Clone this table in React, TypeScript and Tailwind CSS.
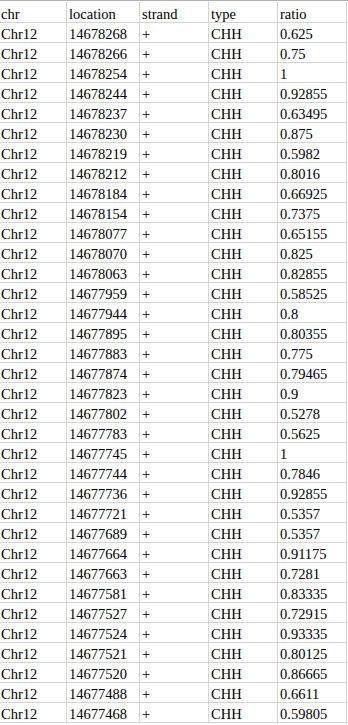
import React from 'react';

const rows: [string, string][] = [
  ['14678268', '0.625'],
  ['14678266', '0.75'],
  ['14678254', '1'],
  ['14678244', '0.92855'],
  ['14678237', '0.63495'],
  ['14678230', '0.875'],
  ['14678219', '0.5982'],
  ['14678212', '0.8016'],
  ['14678184', '0.66925'],
  ['14678154', '0.7375'],
  ['14678077', '0.65155'],
  ['14678070', '0.825'],
  ['14678063', '0.82855'],
  ['14677959', '0.58525'],
  ['14677944', '0.8'],
  ['14677895', '0.80355'],
  ['14677883', '0.775'],
  ['14677874', '0.79465'],
  ['14677823', '0.9'],
  ['14677802', '0.5278'],
  ['14677783', '0.5625'],
  ['14677745', '1'],
  ['14677744', '0.7846'],
  ['14677736', '0.92855'],
  ['14677721', '0.5357'],
  ['14677689', '0.5357'],
  ['14677664', '0.91175'],
  ['14677663', '0.7281'],
  ['14677581', '0.83335'],
  ['14677527', '0.72915'],
  ['14677524', '0.93335'],
  ['14677521', '0.80125'],
  ['14677520', '0.86665'],
  ['14677488', '0.6611'],
  ['14677468', '0.59805'],
];

const cols = 'grid grid-cols-[67px_73px_69px_69px_69px]';

const Cell = ({ children, first }: { children: React.ReactNode; first?: boolean }) => (
  <div
    className={`flex items-end h-full border-r border-b border-[#d4d4d4] pb-[1px] overflow-hidden whitespace-nowrap ${
      first ? 'pl-[1px]' : 'pl-[2px]'
    }`}
  >
    {children}
  </div>
);

export default function App() {
  return (
    <div className="w-[348px] h-[725px] bg-white overflow-hidden text-black text-[14.5px] leading-none font-['Liberation_Serif','Times_New_Roman',serif]">
      <div className="border-t border-[#b0b0b0] pt-[1px]">
        <div className={`${cols} h-[21px]`}>
          <Cell first>chr</Cell>
          <Cell>location</Cell>
          <Cell>strand</Cell>
          <Cell>type</Cell>
          <Cell>ratio</Cell>
        </div>
        {rows.map(([loc, ratio]) => (
          <div key={loc} className={`${cols} h-[20px]`}>
            <Cell first>Chr12</Cell>
            <Cell>{loc}</Cell>
            <Cell>+</Cell>
            <Cell>CHH</Cell>
            <Cell>{ratio}</Cell>
          </div>
        ))}
      </div>
    </div>
  );
}
